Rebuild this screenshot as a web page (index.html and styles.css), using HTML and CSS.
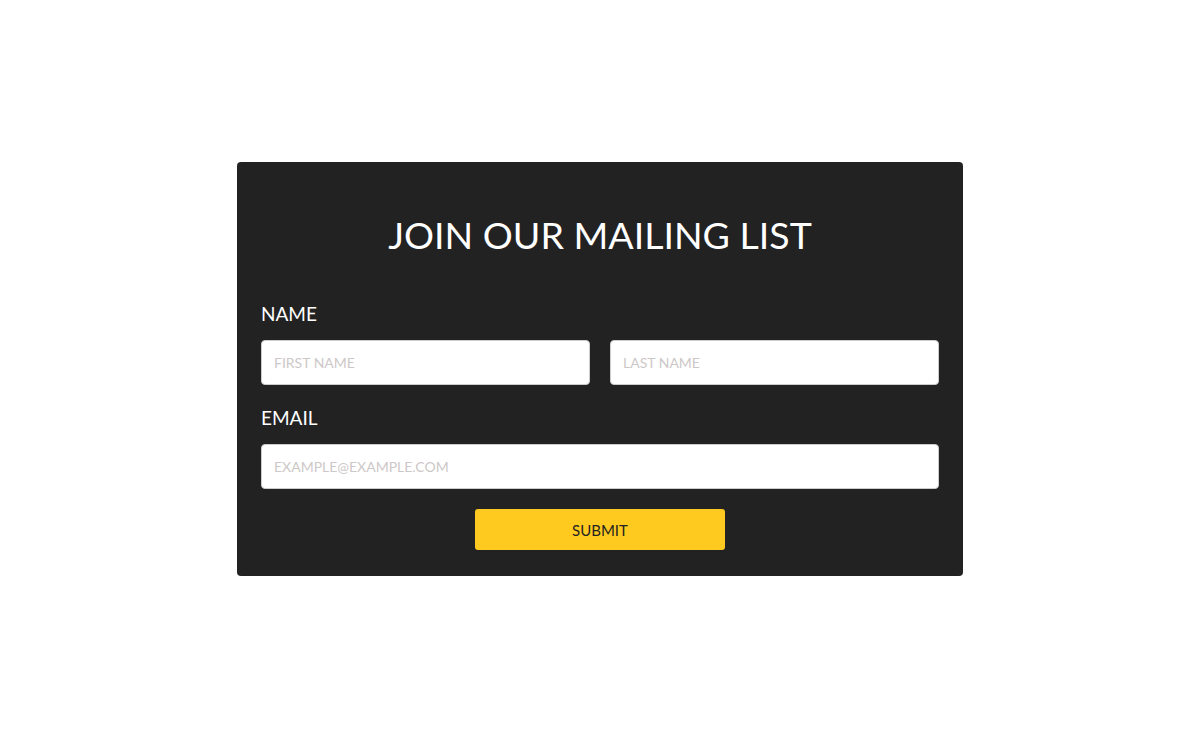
FILE: index.html
```html
<!DOCTYPE html>
<html lang="en">
<head>
    <meta charset="UTF-8">
    <meta name="viewport" content="width=device-width, initial-scale=1.0">
    <title>Join Our Mailing List</title>
    <link rel="stylesheet" href="styles.css">
</head>
<body>

<form class="signup" id="signupForm">
    <h2 class="signup-title">Join Our Mailing List</h2>

    <label class="field-label">Name</label>
    <div class="row">
        <input type="text" name="first" placeholder="First Name">
        <input type="text" name="last" placeholder="Last Name">
    </div>

    <label class="field-label" for="email">Email</label>
    <div class="row row-last">
        <input type="email" id="email" name="email" placeholder="example@example.com">
    </div>

    <div class="actions">
        <button type="submit">Submit</button>
    </div>
</form>

</body>
</html>
```

FILE: styles.css
```css
body {
    margin: 0;
    height: 738px;
    display: flex;
    align-items: center;
    justify-content: center;
    background-color: #fff;
    font-family: Lato, "Open Sans", sans-serif;
}
.signup {
    width: 726px;
    box-sizing: border-box;
    padding: 48px 24px 26px;
    background-color: #222;
    border-radius: 4px;
}
.signup-title {
    margin: 0 0 42px;
    color: #fff;
    font-weight: 400;
    font-size: 37.5px;
    line-height: 50px;
    text-align: center;
    text-transform: uppercase;
}
.field-label {
    display: block;
    color: #fff;
    font-size: 19px;
    line-height: 24px;
    text-transform: uppercase;
    margin-bottom: 14px;
}
.row {
    display: flex;
    gap: 20px;
    margin-bottom: 21px;
}
.row-last {
    margin-bottom: 20px;
}
.row input {
    flex: 1;
    min-width: 0;
    height: 45px;
    box-sizing: border-box;
    padding: 0 12px;
    border: 1px solid #ccc;
    border-radius: 4px;
    font-family: inherit;
    font-size: 14px;
    text-transform: uppercase;
}
.row input::placeholder {
    color: #cdc8c8;
}
.actions {
    display: flex;
    justify-content: center;
}
button {
    width: 250px;
    height: 41px;
    background-color: #ffca1f;
    color: #222;
    border: none;
    border-radius: 3px;
    font-family: inherit;
    font-size: 15px;
    text-transform: uppercase;
    cursor: pointer;
}
```
